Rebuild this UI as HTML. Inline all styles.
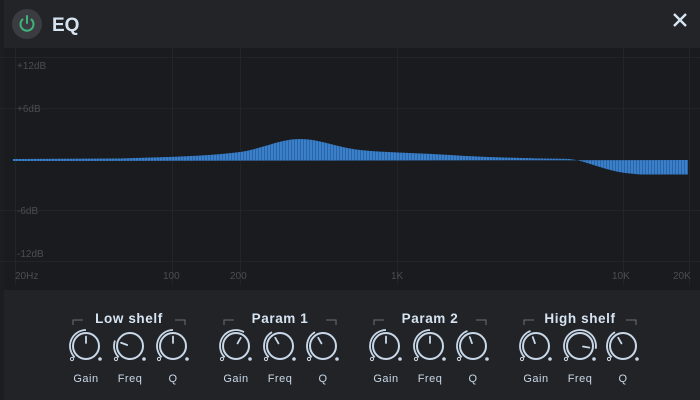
<!DOCTYPE html>
<html><head><meta charset="utf-8"><style>
body{margin:0;width:700px;height:400px;overflow:hidden;background:#222327;font-family:"Liberation Sans",sans-serif}
svg{display:block}
</style></head><body>
<svg id="s" width="700" height="400" xmlns="http://www.w3.org/2000/svg">
<defs>
<pattern id="st" width="3" height="10" patternUnits="userSpaceOnUse">
<rect width="3" height="10" fill="#3a7fca"/><rect width="1" height="10" fill="#2c65a6"/>
</pattern>
</defs>
<rect x="0" y="0" width="700" height="48" fill="#232428"/>
<rect x="0" y="48" width="700" height="242" fill="#1a1b1e"/>
<rect x="0" y="290" width="700" height="110" fill="#222327"/>
<rect x="0" y="0" width="4" height="400" fill="#1c1d20"/>
<g stroke="#222429" stroke-width="1">
<line x1="15.5" y1="48" x2="15.5" y2="285"/><line x1="172.5" y1="48" x2="172.5" y2="285"/>
<line x1="240.5" y1="48" x2="240.5" y2="285"/><line x1="397.5" y1="48" x2="397.5" y2="285"/>
<line x1="623.5" y1="48" x2="623.5" y2="285"/><line x1="689.5" y1="48" x2="689.5" y2="285"/>
<line x1="0" y1="57.5" x2="700" y2="57.5"/><line x1="0" y1="108.5" x2="700" y2="108.5"/>
<line x1="0" y1="210.5" x2="700" y2="210.5"/><line x1="0" y1="261.5" x2="700" y2="261.5"/>
</g>
<g fill="#4a4d53" font-size="10">
<text x="17" y="69">+12dB</text><text x="17" y="112">+6dB</text>
<text x="17" y="214">-6dB</text><text x="17" y="257">-12dB</text>
<text x="15" y="279">20Hz</text><text x="163" y="279">100</text><text x="230" y="279">200</text>
<text x="391" y="279">1K</text><text x="612" y="279">10K</text><text x="673" y="279">20K</text>
</g>
<path fill="url(#st)" d="M13,159 L120,158.5 C170,157 210,156 240,152 C265,148 280,139 300,139 C320,139 335,147 360,150 C390,153 420,153 450,155 C480,157 510,158 570,159 L576,160 C590,163 605,170 625,173 L640,174.5 L688,174.5 L688,160 L13,161 Z"/>
<circle cx="27" cy="24" r="15" fill="#3a3c41"/>
<path d="M22.5,19.5 A6.5,6.5 0 1 0 31.5,19.5" fill="none" stroke="#3fb37a" stroke-width="2" stroke-linecap="round"/>
<line x1="27" y1="16" x2="27" y2="23" stroke="#3fb37a" stroke-width="2" stroke-linecap="round"/>
<text x="52" y="31" fill="#d6e4f2" font-size="19" font-weight="bold">EQ</text>
<path d="M674,14 L686,26 M686,14 L674,26" stroke="#d6e4f2" stroke-width="2.4"/>
<g id="k" fill="#c8d8e8" font-size="11.5" font-weight="bold" text-anchor="middle"></g>
</svg>
<script>
var g=document.getElementById('k'),h='';
var groups=[["Low shelf",129,[86,130,173],[0,-70,0]],["Param 1",280,[236,280,323],[30,-30,-30]],["Param 2",430,[386,430,473],[0,0,-20]],["High shelf",580,[536,580,623],[-20,100,-30]]];
var labels=["Gain","Freq","Q"];
function pt(cx,cy,r,a){a=a*Math.PI/180;return [cx+r*Math.sin(a),cy-r*Math.cos(a)];}
groups.forEach(function(G){
 var cx=G[1];
 h+='<text x="'+cx+'" y="323" font-size="13.5" fill="#d6e4f2" letter-spacing="0.6">'+G[0]+'</text>';
 h+='<path d="M'+(cx-56)+',325 v-5 h10 M'+(cx+56)+',325 v-5 h-10" stroke="#6b7078" fill="none"/>';
 G[2].forEach(function(x,i){
  var y=346,a=G[3][i];
  h+='<circle cx="'+x+'" cy="'+y+'" r="13" fill="none" stroke="#c8d8e8" stroke-width="2"/>';
  var p0=pt(x,y,16,-135),p1=pt(x,y,16,a),large=(a+135)>180?1:0;
  h+='<path d="M'+p0[0]+','+p0[1]+' A16,16 0 '+large+' 1 '+p1[0]+','+p1[1]+'" fill="none" stroke="#c8d8e8" stroke-width="1.8"/>';
  var q0=pt(x,y,3,a),q1=pt(x,y,9.5,a);
  h+='<line x1="'+q0[0]+'" y1="'+q0[1]+'" x2="'+q1[0]+'" y2="'+q1[1]+'" stroke="#c8d8e8" stroke-width="1.8" stroke-linecap="round"/>';
  h+='<circle cx="'+(x-14)+'" cy="'+(y+13)+'" r="1.6" fill="none" stroke="#c8d8e8" stroke-width="1"/>';
  h+='<circle cx="'+(x+14)+'" cy="'+(y+13)+'" r="1.8" fill="#c8d8e8" stroke="none"/>';
  h+='<text x="'+x+'" y="382" font-size="11" font-weight="normal" fill="#c8d8e8" letter-spacing="0.5">'+labels[i]+'</text>';
 });
});
g.innerHTML=h;
</script>
</body></html>
